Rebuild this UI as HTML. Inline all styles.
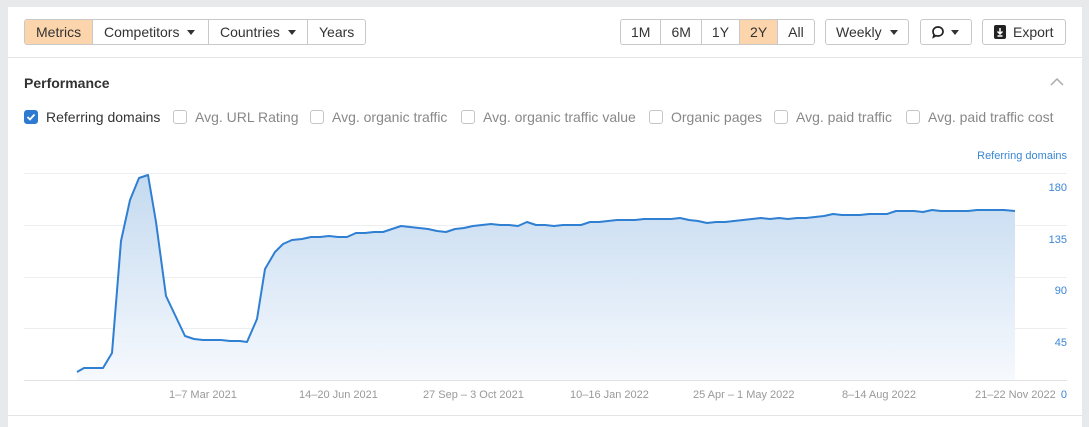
<!DOCTYPE html>
<html><head><meta charset="utf-8"><style>
*{box-sizing:border-box;margin:0;padding:0}
body{width:1089px;height:423px;background:#e8e9eb;font-family:"Liberation Sans",sans-serif;color:#333;position:relative;overflow:hidden}
.panel{position:absolute;left:8px;top:7px;width:1074px;height:420px;background:#fff}
.grp{position:absolute;top:19px;height:26px;display:flex;border:1px solid #c9c9c9;border-radius:3px;overflow:hidden;font-size:14px}
.grp div{padding:0 10px;line-height:24px;border-right:1px solid #c9c9c9;white-space:nowrap}
.grp.a div{padding:0 11px}
.grp div:last-child{border-right:none}
.on{background:#fdd5ad}
.btn{position:absolute;top:19px;height:26px;border:1px solid #c9c9c9;border-radius:3px;font-size:14px;line-height:24px;padding:0 10px;white-space:nowrap}
.car{display:inline-block;width:0;height:0;border-left:4px solid transparent;border-right:4px solid transparent;border-top:5px solid #333;margin-left:8px;vertical-align:2px}
.cb{position:absolute;top:109px;font-size:14px;color:#888;white-space:nowrap;display:flex;align-items:center}
.cb i{display:inline-block;width:14px;height:14px;border:1px solid #c5c5c5;border-radius:3px;margin-right:8px}
.ax{position:absolute;font-size:11px;color:#3a86d6}
.xl{position:absolute;top:389px;font-size:11px;color:#999;white-space:nowrap}
</style></head><body>
<div class="panel"></div>
<div style="position:absolute;left:8px;top:57px;width:1074px;height:1px;background:#e5e5e5"></div>
<div style="position:absolute;left:8px;top:415px;width:1074px;height:1px;background:#e5e5e5"></div>
<div class="grp a" style="left:24px"><div class="on" style="width:68px">Metrics</div><div style="width:116px">Competitors<span class="car"></span></div><div style="width:99px">Countries<span class="car"></span></div><div>Years</div></div>
<div class="grp" style="left:620px"><div>1M</div><div>6M</div><div>1Y</div><div class="on">2Y</div><div>All</div></div>
<div class="btn" style="left:825px">Weekly<span class="car"></span></div>
<div class="btn" style="left:920px;width:52px"><svg width="14" height="14" viewBox="0 0 14 14" style="vertical-align:-2px"><path d="M7 2c3 0 5 2 5 4.5S10 11 7 11c-.8 0-1.5-.1-2.1-.4L2.5 12l.6-2.3C2.4 8.9 2 7.8 2 6.5 2 4 4 2 7 2z" fill="none" stroke="#222" stroke-width="1.7"/></svg><span class="car" style="margin-left:6px"></span></div>
<div class="btn" style="left:982px;width:84px;padding-left:11px"><svg width="12" height="14" viewBox="0 0 12 14" style="vertical-align:-2px;margin-right:7px"><rect x="0" y="0" width="12" height="14" rx="2" fill="#222"/><path d="M6 3v6M3.5 6.5L6 9l2.5-2.5M3.5 11h5" stroke="#fff" stroke-width="1.5" fill="none"/></svg>Export</div>
<div style="position:absolute;left:24px;top:75px;font-size:14px;font-weight:bold;color:#333">Performance</div>
<svg style="position:absolute;left:1050px;top:77px" width="14" height="9"><path d="M1 8l6-6 6 6" stroke="#aaa" stroke-width="1.5" fill="none"/></svg>
<div class="cb" style="left:24px;color:#333"><i style="background:#2e7ad1;border-color:#2e7ad1;position:relative"><svg width="12" height="12" style="position:absolute;left:0;top:0"><path d="M2.5 6l2.5 2.5 4.5-5" stroke="#fff" stroke-width="1.8" fill="none"/></svg></i>Referring domains</div>
<div class="cb" style="left:173px"><i></i>Avg. URL Rating</div>
<div class="cb" style="left:310px"><i></i>Avg. organic traffic</div>
<div class="cb" style="left:461px"><i></i>Avg. organic traffic value</div>
<div class="cb" style="left:649px"><i></i>Organic pages</div>
<div class="cb" style="left:774px"><i></i>Avg. paid traffic</div>
<div class="cb" style="left:906px"><i></i>Avg. paid traffic cost</div>
<div class="ax" style="right:22px;top:150px">Referring domains</div>
<svg style="position:absolute;left:0;top:0" width="1089" height="423">
<defs><linearGradient id="g" x1="0" y1="0" x2="0" y2="1"><stop offset="0" stop-color="#c4daf0"/><stop offset="1" stop-color="#f6f9fd"/></linearGradient></defs>
<g stroke="#eceef1" stroke-width="1"><line x1="24" y1="173.5" x2="1067" y2="173.5"/><line x1="24" y1="225.5" x2="1067" y2="225.5"/><line x1="24" y1="277.5" x2="1067" y2="277.5"/><line x1="24" y1="328.5" x2="1067" y2="328.5"/><line x1="24" y1="380.5" x2="1067" y2="380.5" stroke="#e2e2e2"/></g>
<polygon fill="url(#g)" points="77,380 77,372 84,368 103,368 112,353 121,241 130,200 139,178 148,175 156,222 166,296 185,336 194,339 203,340 221,340 230,341 240,341 247,342 257,319 265,269 275,252 283,244 292,240 302,239 311,237 320,237 329,236 338,237 347,237 356,233 365,233 374,232 383,232 392,229 401,226 410,227 419,228 428,229 437,231 446,232 455,229 464,228 473,226 482,225 491,224 500,225 509,225 518,226 527,222 536,225 545,225 554,226 563,225 572,225 581,225 590,222 599,222 608,221 617,220 626,220 635,220 644,219 653,219 662,219 671,219 680,218 689,220 698,221 707,223 716,222 725,222 734,221 743,220 752,219 761,218 770,219 779,218 788,219 797,218 806,218 815,217 824,216 833,214 842,215 851,215 860,215 869,214 878,214 887,214 896,211 905,211 914,211 923,212 932,210 941,211 950,211 959,211 968,211 977,210 986,210 995,210 1004,210 1015,211 1015,380"/>
<polyline fill="none" stroke="#2f7fd3" stroke-width="2" stroke-linejoin="round" points="77,372 84,368 103,368 112,353 121,241 130,200 139,178 148,175 156,222 166,296 185,336 194,339 203,340 221,340 230,341 240,341 247,342 257,319 265,269 275,252 283,244 292,240 302,239 311,237 320,237 329,236 338,237 347,237 356,233 365,233 374,232 383,232 392,229 401,226 410,227 419,228 428,229 437,231 446,232 455,229 464,228 473,226 482,225 491,224 500,225 509,225 518,226 527,222 536,225 545,225 554,226 563,225 572,225 581,225 590,222 599,222 608,221 617,220 626,220 635,220 644,219 653,219 662,219 671,219 680,218 689,220 698,221 707,223 716,222 725,222 734,221 743,220 752,219 761,218 770,219 779,218 788,219 797,218 806,218 815,217 824,216 833,214 842,215 851,215 860,215 869,214 878,214 887,214 896,211 905,211 914,211 923,212 932,210 941,211 950,211 959,211 968,211 977,210 986,210 995,210 1004,210 1015,211"/>
</svg>
<div class="ax" style="right:22px;top:182px">180</div>
<div class="ax" style="right:22px;top:234px">135</div>
<div class="ax" style="right:22px;top:285px">90</div>
<div class="ax" style="right:22px;top:337px">45</div>
<div class="ax" style="right:22px;top:389px">0</div>
<div class="xl" style="left:169px">1–7 Mar 2021</div>
<div class="xl" style="left:299px">14–20 Jun 2021</div>
<div class="xl" style="left:423px">27 Sep – 3 Oct 2021</div>
<div class="xl" style="left:570px">10–16 Jan 2022</div>
<div class="xl" style="left:693px">25 Apr – 1 May 2022</div>
<div class="xl" style="left:842px">8–14 Aug 2022</div>
<div class="xl" style="left:975px">21–22 Nov 2022</div>
</body></html>
